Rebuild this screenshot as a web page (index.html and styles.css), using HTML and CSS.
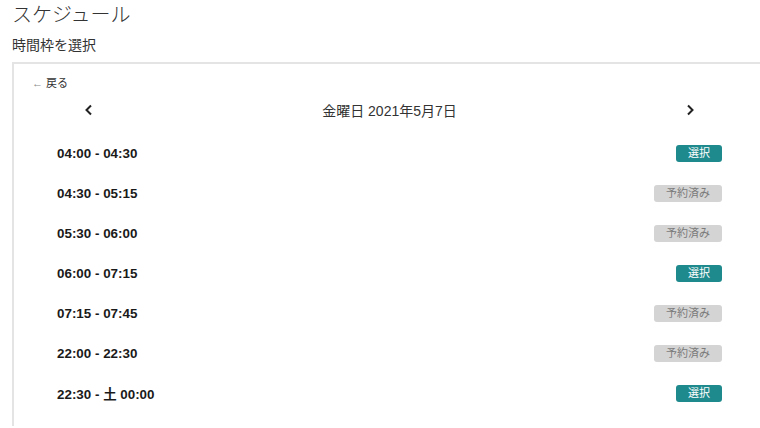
FILE: index.html
```html
<!DOCTYPE html>
<html lang="ja">
<head>
<meta charset="UTF-8">
<meta name="viewport" content="width=device-width, initial-scale=1.0">
<title>スケジュール</title>
<link rel="stylesheet" href="styles.css">
</head>
<body>
    <div class="page">
        <h1 class="title">スケジュール</h1>
        <div class="subtitle">時間枠を選択</div>

        <div class="card">
            <a class="back" href="#"><span class="arrow">&larr;</span> 戻る</a>

            <div class="nav">
                <span class="chevron">
                    <svg width="10" height="12" viewBox="0 0 10 12"><path d="M7 1.5 L2.5 6 L7 10.5" fill="none" stroke="#222" stroke-width="2"/></svg>
                </span>
                <span class="date">金曜日 2021年5月7日</span>
                <span class="chevron">
                    <svg width="10" height="12" viewBox="0 0 10 12"><path d="M3 1.5 L7.5 6 L3 10.5" fill="none" stroke="#222" stroke-width="2"/></svg>
                </span>
            </div>

            <div class="slots">
                <div class="slot"><span class="time">04:00 - 04:30</span><button class="btn select">選択</button></div>
                <div class="slot"><span class="time">04:30 - 05:15</span><button class="btn booked">予約済み</button></div>
                <div class="slot"><span class="time">05:30 - 06:00</span><button class="btn booked">予約済み</button></div>
                <div class="slot"><span class="time">06:00 - 07:15</span><button class="btn select">選択</button></div>
                <div class="slot"><span class="time">07:15 - 07:45</span><button class="btn booked">予約済み</button></div>
                <div class="slot"><span class="time">22:00 - 22:30</span><button class="btn booked">予約済み</button></div>
                <div class="slot"><span class="time">22:30 - 土 00:00</span><button class="btn select">選択</button></div>
            </div>
        </div>
    </div>
</body>
</html>
```

FILE: styles.css
```css
/* schedule picker */
html, body {
    margin: 0;
    overflow: hidden;
    background: #fff;
}

body {
    font-family: "Liberation Sans", "Noto Sans CJK JP", sans-serif;
    color: #222;
}

.page {
    padding: 0 0 0 12px;
    width: 760px;
}

.title {
    margin: 0;
    font-size: 20px;
    font-weight: 300;
    line-height: 30px;
    color: #333;
}

.subtitle {
    font-size: 14px;
    line-height: 20px;
    margin-top: 5px;
    color: #333;
}

.card {
    margin-top: 7px;
    width: 751px;
    border: 2px solid #e4e4e4;
    border-bottom: none;
    padding: 11px 0 13px;
}

.back {
    display: block;
    margin-left: 18px;
    font-size: 11px;
    line-height: 16px;
    color: #333;
    text-decoration: none;
}

.back .arrow {
    color: #888;
}

.nav {
    display: flex;
    justify-content: space-between;
    align-items: center;
    height: 24px;
    margin-top: 7px;
    padding: 0 70px;
}

.chevron {
    display: flex;
    align-items: center;
}

.date {
    font-size: 14px;
    color: #333;
}

.slots {
    margin-top: 11px;
}

.slot {
    display: flex;
    justify-content: space-between;
    align-items: center;
    height: 40px;
    padding: 0 43px;
}

.time {
    font-size: 13.4px;
    font-weight: bold;
    color: #1a1a1a;
}

.btn {
    height: 17px;
    padding: 0 12px;
    border: none;
    border-radius: 3px;
    font-family: "Liberation Sans", "Noto Sans CJK JP", sans-serif;
    font-size: 11px;
    line-height: 17px;
}

.select {
    background: #1f8a8d;
    color: #fff;
}

.booked {
    background: #d4d4d4;
    color: #7a7a7a;
}
```
